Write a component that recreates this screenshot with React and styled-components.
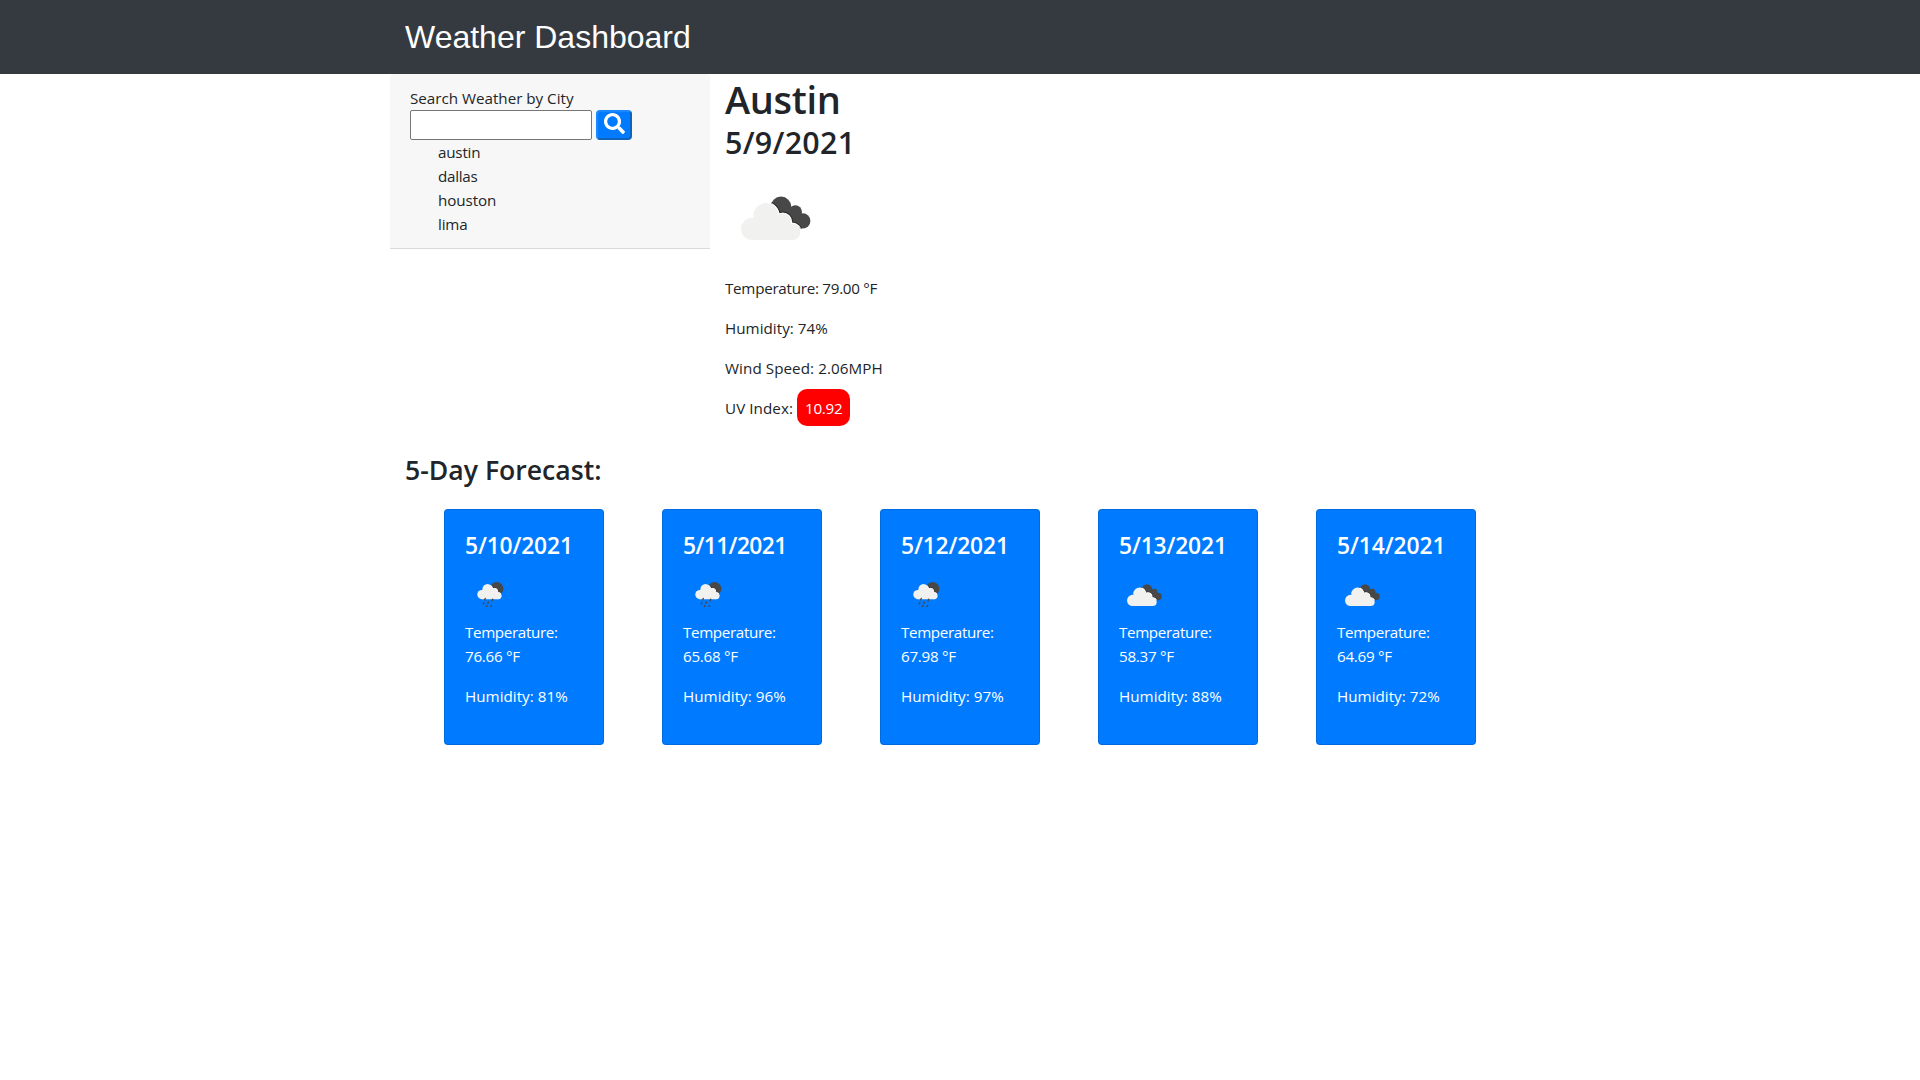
import React, { useId } from "react";
import styled, { createGlobalStyle } from "styled-components";
import { FaSearch } from "react-icons/fa";

const GlobalStyle = createGlobalStyle`
  *, *::before, *::after { box-sizing: border-box; }
  body {
    margin: 0;
    background: #fff;
    color: #212529;
    font-family: "Open Sans", "Noto Sans", sans-serif;
    font-size: 15.2px;
    line-height: 24px;
  }
`;

const Header = styled.header`
  height: 74px;
  background: #343a40;
`;

const Container = styled.div`
  width: 1140px;
  margin: 0 auto;
`;

const Brand = styled.h1`
  margin: 0;
  padding: 18px 15px 0;
  font: 400 32px/38px "Liberation Sans", Arial, sans-serif;
  color: #fff;
`;

const Columns = styled.main`
  display: flex;
  align-items: flex-start;
`;

const SearchPanel = styled.aside`
  width: 320px;
  margin-right: 15px;
  padding: 12px 20px;
  background: #f7f7f7;
  border-bottom: 1px solid #d9d9d9;
  border-radius: 3px 3px 0 0;
`;

const Label = styled.label`
  display: block;
  letter-spacing: -0.01px;
`;

const SearchForm = styled.form`
  display: flex;
  gap: 4px;
  height: 30px;
`;

const CityInput = styled.input`
  width: 182px;
  height: 30px;
  padding: 1px 2px;
  border: 1px solid #767676;
  border-radius: 2px;
  background: #fff;
  font: inherit;
`;

const SearchButton = styled.button`
  display: flex;
  align-items: flex-start;
  justify-content: center;
  width: 36px;
  height: 30px;
  padding: 1px 0 0 1px;
  border: 2px solid;
  border-color: #1a88ff #0f63b8 #0f63b8 #1a88ff;
  border-radius: 4px;
  background: #007bff;
  color: #fff;
  font-size: 21px;
`;

const CityList = styled.ul`
  margin: 0;
  padding: 0 0 0 28px;
  list-style: none;
`;

const City = styled.li`
  letter-spacing: ${(p) => p.$tracking}px;
`;

const Current = styled.section`
  flex: 1;
`;

const CityName = styled.h2`
  margin: 0;
  padding-top: 2px;
  font-size: 38px;
  font-weight: 600;
  line-height: 46px;
  letter-spacing: -0.33px;
`;

const CurrentDate = styled.h3`
  margin: 0 0 8px;
  padding-top: 4px;
  font-size: 30.4px;
  font-weight: 600;
  line-height: 34px;
  letter-spacing: 0.3px;
`;

const Reading = styled.p`
  margin: 0 0 16px;
  letter-spacing: ${(p) => p.$tracking || 0}px;
`;

const UvBadge = styled.span`
  padding: 9px 8px 8px;
  border-radius: 10px;
  background: #f00;
  color: #fff;
  letter-spacing: -0.3px;
`;

const WeatherIcon = styled.svg`
  display: block;
  width: ${(p) => p.$size}px;
  height: ${(p) => p.$size}px;
  margin-bottom: ${(p) => p.$gap || 0}px;
`;

const ForecastTitle = styled.h3`
  margin: 16px 15px 22px;
  padding-top: 1px;
  font-size: 26.6px;
  font-weight: 600;
  line-height: 34px;
  letter-spacing: 0.01px;
`;

const Forecast = styled.section`
  display: flex;
  gap: 58px;
  padding-left: 54px;
`;

const DayCard = styled.article`
  width: 160px;
  height: 236px;
  padding: 20px;
  border: 1px solid rgba(0, 0, 0, 0.125);
  border-radius: 4px;
  background: #007bff;
  color: #fff;
`;

const DayTitle = styled.h4`
  margin: 0 0 11px;
  padding-top: 3px;
  font-size: 22.8px;
  font-weight: 600;
  line-height: 26px;
  letter-spacing: ${(p) => p.$tracking}px;
`;

const Tight = styled.span`
  display: block;
  letter-spacing: ${(p) => p.$tracking}px;
`;

function CloudShape(props) {
  return (
    <g {...props}>
      <circle cx="27.3" cy="60.9" r="11.2" />
      <circle cx="41" cy="47.6" r="12.5" />
      <circle cx="57.8" cy="53.8" r="8.2" />
      <circle cx="67.2" cy="63.9" r="8.2" />
      <path d="M27 72.1V50H58L67.2 58V72.1Z" />
    </g>
  );
}

function BackCloud() {
  return (
    <>
      <circle cx="56" cy="39" r="10.4" />
      <circle cx="70.4" cy="43.9" r="6.6" />
      <circle cx="77.8" cy="52.9" r="7.6" />
      <path d="M48 45L60 40L70 42L77 52L76.5 60.4L60 56Z" />
    </>
  );
}

function Icon({ kind, size, gap }) {
  const id = useId();
  const rain = kind === "rain";
  const back = rain ? <circle cx="63.4" cy="37.6" r="13.4" /> : <BackCloud />;
  const place = rain ? "translate(11.4 -0.7) scale(.82)" : undefined;
  return (
    <WeatherIcon viewBox="0 0 100 100" $size={size} $gap={gap} aria-hidden="true">
      <clipPath id={id}>{back}</clipPath>
      <g fill="#484849">{back}</g>
      <g clipPath={`url(#${id})`}>
        <CloudShape transform={place} fill="#222" stroke="#222" strokeWidth="4" />
        <CloudShape transform={place} fill="#fff" stroke="#fff" strokeWidth="2.4" />
      </g>
      <CloudShape transform={place} fill="#f1f1f0" />
      {rain && (
        <path
          d="M40.5 57L39.5 59.5M55.3 58.5L54.2 61.5M37.8 65.5L36.5 68M47 64L45.5 67M44 71.3L43 73M53 71.3L52 73"
          stroke="#484849"
          strokeWidth="2.8"
          strokeLinecap="round"
        />
      )}
    </WeatherIcon>
  );
}

const cities = [
  { name: "austin", tracking: -0.2 },
  { name: "dallas", tracking: -0.27 },
  { name: "houston", tracking: -0.08 },
  { name: "lima", tracking: -0.2 },
];

const days = [
  { date: "5/10/2021", tracking: -0.14, icon: "rain", temp: "76.66", humidity: 81 },
  { date: "5/11/2021", tracking: -0.6, icon: "rain", temp: "65.68", humidity: 96 },
  { date: "5/12/2021", tracking: -0.14, icon: "rain", temp: "67.98", humidity: 97 },
  { date: "5/13/2021", tracking: -0.14, icon: "clouds", temp: "58.37", humidity: 88 },
  { date: "5/14/2021", tracking: -0.06, icon: "clouds", temp: "64.69", humidity: 72 },
];

export default function App() {
  return (
    <>
      <GlobalStyle />
      <Header>
        <Container>
          <Brand>Weather Dashboard</Brand>
        </Container>
      </Header>
      <Container>
        <Columns>
          <SearchPanel>
            <Label htmlFor="city">Search Weather by City</Label>
            <SearchForm onSubmit={(e) => e.preventDefault()}>
              <CityInput id="city" type="text" />
              <SearchButton type="submit" aria-label="Search">
                <FaSearch />
              </SearchButton>
            </SearchForm>
            <CityList>
              {cities.map((c) => (
                <City key={c.name} $tracking={c.tracking}>{c.name}</City>
              ))}
            </CityList>
          </SearchPanel>
          <Current>
            <CityName>Austin</CityName>
            <CurrentDate>5/9/2021</CurrentDate>
            <Icon kind="clouds" size={100} gap={8} />
            <Reading $tracking={-0.27}>Temperature: 79.00 °F</Reading>
            <Reading $tracking={0.03}>Humidity: 74%</Reading>
            <Reading $tracking={0.07}>Wind Speed: 2.06MPH</Reading>
            <Reading $tracking={0.07}>
              UV Index: <UvBadge>10.92</UvBadge>
            </Reading>
          </Current>
        </Columns>
        <ForecastTitle>5-Day Forecast:</ForecastTitle>
        <Forecast>
          {days.map((d) => (
            <DayCard key={d.date}>
              <DayTitle $tracking={d.tracking}>{d.date}</DayTitle>
              <Icon kind={d.icon} size={50} />
              <Reading>
                <Tight $tracking={-0.36}>Temperature:</Tight>
                <Tight $tracking={-0.26}>{d.temp} °F</Tight>
              </Reading>
              <Reading $tracking={0.02}>Humidity: {d.humidity}%</Reading>
            </DayCard>
          ))}
        </Forecast>
      </Container>
    </>
  );
}
